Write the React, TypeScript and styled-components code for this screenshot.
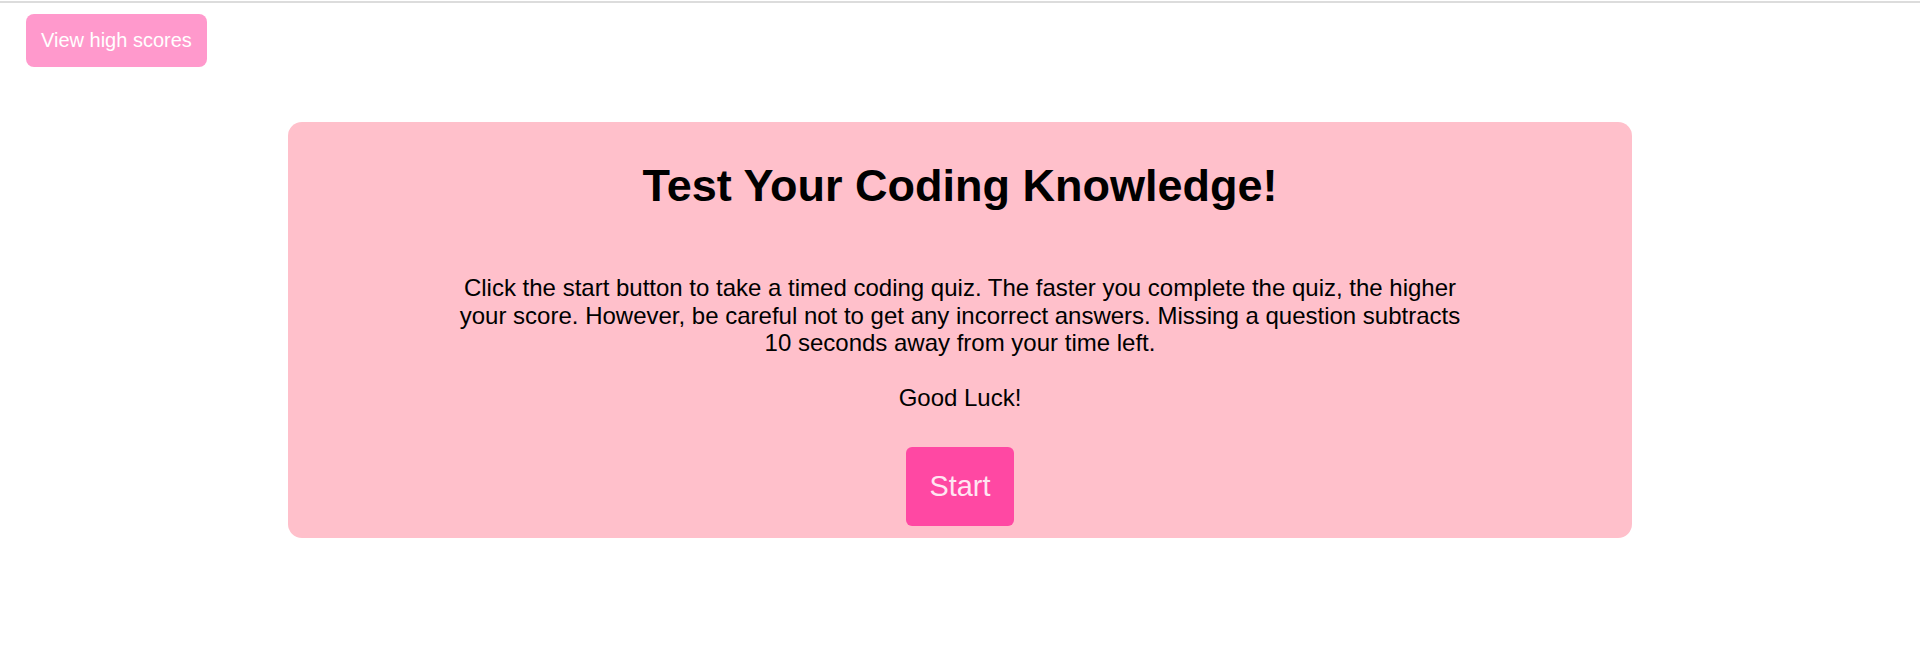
import React from 'react';
import styled, { createGlobalStyle } from 'styled-components';

const GlobalStyle = createGlobalStyle`
  body {
    margin: 0;
    background: #ffffff;
    font-family: "Liberation Sans", Arial, sans-serif;
    color: #000000;
  }
`;

const Page = styled.div`
  display: flex;
  flex-direction: column;
  border-top: 2px solid #dcdcdc;
  margin-top: 1px;
`;

const Header = styled.header`
  display: flex;
  padding: 11px 26px 0;
`;

const ScoresButton = styled.button`
  font-family: inherit;
  font-size: 20px;
  line-height: 23px;
  padding: 15px 15px;
  color: #ffffff;
  background: #ff99cc;
  border: none;
  border-radius: 8px;
  cursor: pointer;
`;

const Card = styled.main`
  width: 70%;
  margin: 55px auto 0;
  padding: 38px 0 12px;
  background: pink;
  border-radius: 14px;
  display: flex;
  flex-direction: column;
  align-items: center;
  text-align: center;
`;

const Title = styled.h1`
  margin: 0;
  font-size: 45px;
  font-weight: bold;
  line-height: 52px;
`;

const Intro = styled.p`
  margin: 62px 0 0;
  width: 1010px;
  font-size: 24px;
  line-height: 27.6px;
`;

const StartButton = styled.button`
  margin-top: 35px;
  font-family: inherit;
  font-size: 28.8px;
  line-height: 33px;
  padding: 23px 23.5px;
  color: #ffe6f2;
  background: #ff48a3;
  border: none;
  border-radius: 6px;
  cursor: pointer;
`;

const App = () => {
  return (
    <>
      <GlobalStyle />
      <Page>
        <Header>
          <ScoresButton>View high scores</ScoresButton>
        </Header>
        <Card>
          <Title>Test Your Coding Knowledge!</Title>
          <Intro>
            Click the start button to take a timed coding quiz. The faster you complete the quiz, the higher
            your score. However, be careful not to get any incorrect answers. Missing a question subtracts 10
            seconds away from your time left.
            <br />
            <br />
            Good Luck!
          </Intro>
          <StartButton>Start</StartButton>
        </Card>
      </Page>
    </>
  );
};

export default App;
